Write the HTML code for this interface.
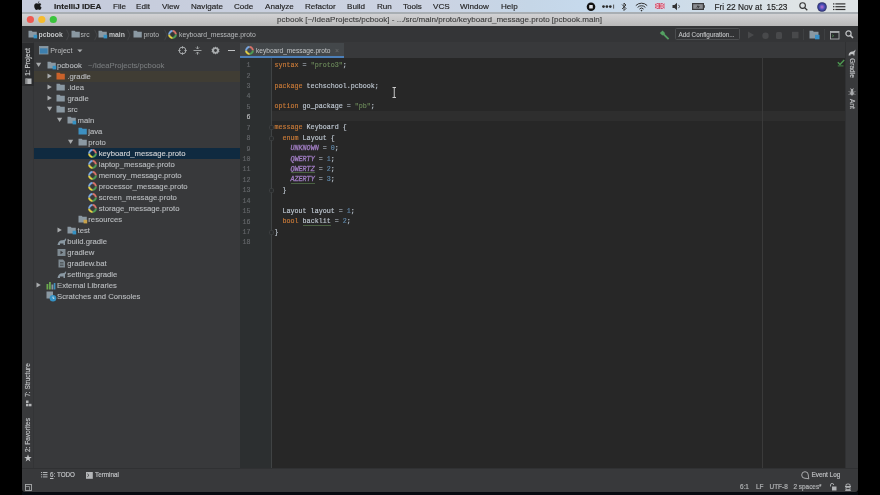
<!DOCTYPE html><html><head><meta charset="utf-8"><style>
*{margin:0;padding:0;box-sizing:border-box}
html,body{width:880px;height:495px;overflow:hidden;background:#000}
body{position:relative;font-family:"Liberation Sans",sans-serif}
#wrap{position:absolute;left:0;top:0;width:880px;height:495px;filter:blur(0.3px)}
.a{position:absolute}
.t{position:absolute;white-space:nowrap;line-height:1}
svg{position:absolute;overflow:visible}
#menubar{left:22px;top:0;width:836px;height:12px;background:linear-gradient(90deg,#c7cddd 0px,#c6ccdc 85px,#cad1e0 278px,#ccd3e2 405px,#c5d6e7 508px,#c6d9ec 558px,#d0dde8 689px,#dfe4e6 772px,#dee4e6 836px)}
#menuline{left:22px;top:12px;width:836px;height:1.8px;background:#a8aeb3}
#titlebar{left:22px;top:13.8px;width:836px;height:12.2px;background:linear-gradient(#d2d2d4,#b9b9b9)}
#navbar{left:22px;top:26px;width:836px;height:16px;background:#343537}
#lstrip{left:22px;top:42px;width:12px;height:426px;background:#38393b;border-right:1px solid #333436}
#proj{left:34px;top:42px;width:206px;height:426px;background:#38393b}
#tabs{left:240px;top:42px;width:605px;height:16px;background:#38393b}
#gutter{left:240px;top:58px;width:32px;height:410px;background:#2c2f30}
#gline{left:271px;top:58px;width:1px;height:410px;background:#404344}
#editor{left:272px;top:58px;width:573px;height:410px;background:#272727}
#rstrip{left:845px;top:42px;width:13px;height:426px;background:#38393b;border-left:1px solid #303133}
#bstrip{left:22px;top:468px;width:836px;height:13px;background:#38393b;border-top:1px solid #303133}
#status{left:22px;top:481px;width:836px;height:10.8px;background:#38393b;border-radius:0 0 3px 3px}
#bottomnavy{left:22px;top:492px;width:836px;height:3px;background:#070a10}
.menu{top:3px;font-size:8.1px;color:#222;-webkit-text-stroke:0.15px currentColor}
.tree{font-size:7.7px;color:#b9bcbf;-webkit-text-stroke:0.12px currentColor}
.code{font-family:"Liberation Mono",monospace;font-size:6.7px;color:#bfc8d2;-webkit-text-stroke:0.15px currentColor}
.ln{font-family:"Liberation Mono",monospace;font-size:6.6px;color:#5c5f61;text-align:right;width:20px;-webkit-text-stroke:0.15px currentColor}
.kw{color:#c97a38}
.str{color:#6a8759}
.num{color:#6089ab}
.en{color:#9f7cc0;font-style:italic;-webkit-text-stroke:0.3px currentColor}
.sm{font-size:6.4px;color:#bcbec0;-webkit-text-stroke:0.2px currentColor}
</style></head><body><div id="wrap">
<div class="a" id="bottomnavy"></div>
<div class="a" id="menubar"></div>
<div class="a" id="menuline"></div>
<div class="a" id="titlebar"></div>
<div class="a" id="navbar"></div>
<div class="a" id="lstrip"></div>
<div class="a" id="proj"></div>
<div class="a" id="tabs"></div>
<div class="a" id="gutter"></div>
<div class="a" id="editor"></div>
<div class="a" id="gline"></div>
<div class="a" id="rstrip"></div>
<div class="a" id="bstrip"></div>
<div class="a" id="status"></div>
<div class="t menu" style="left:54px;font-weight:bold;">IntelliJ IDEA</div>
<div class="t menu" style="left:113px;">File</div>
<div class="t menu" style="left:136px;">Edit</div>
<div class="t menu" style="left:162px;">View</div>
<div class="t menu" style="left:191px;">Navigate</div>
<div class="t menu" style="left:234px;">Code</div>
<div class="t menu" style="left:265px;">Analyze</div>
<div class="t menu" style="left:305px;">Refactor</div>
<div class="t menu" style="left:347px;">Build</div>
<div class="t menu" style="left:377px;">Run</div>
<div class="t menu" style="left:403px;">Tools</div>
<div class="t menu" style="left:433px;">VCS</div>
<div class="t menu" style="left:460px;">Window</div>
<div class="t menu" style="left:501px;">Help</div>
<div class="t menu" style="left:714.5px;font-size:8.3px;top:2.9px">Fri 22 Nov at&nbsp; 15:23</div>
<svg style="left:34px;top:1px" width="8" height="10" viewBox="0 0 8 10"><path d="M5.3 0.3c0.1 0.7-0.4 1.6-1.2 1.7-0.1-0.7 0.4-1.5 1.2-1.7zM4 2.6c0.5 0 1-0.4 1.6-0.4 0.6 0 1.3 0.4 1.7 1-1.4 0.8-1.2 2.8 0.3 3.4-0.3 0.9-1 2.4-1.9 2.4-0.6 0-0.8-0.4-1.6-0.4-0.8 0-1 0.4-1.6 0.4C1.5 9 0.2 6.9 0.2 5 0.2 3.3 1.300 2.300 2.400 2.300c0.7 0 1.100 0.300 1.600 0.300z" fill="#1a1a1a"/></svg>
<svg style="left:586px;top:2px" width="10" height="10"><circle cx="5" cy="4.8" r="4.3" fill="#111"/><rect x="3.2" y="3" width="3.6" height="3.6" rx="0.6" fill="#e1e4ea"/></svg>
<svg style="left:601.5px;top:4px" width="14" height="6"><circle cx="1.5" cy="2.6" r="1.35" fill="#2a2a2a"/><circle cx="4.9" cy="2.6" r="1.35" fill="#2a2a2a"/><circle cx="8.3" cy="2.6" r="1.35" fill="#2a2a2a"/><rect x="11.2" y="0.6" width="0.9" height="4" fill="#444"/></svg>
<svg style="left:621px;top:1.5px" width="7" height="10"><path d="M1 2.5L5 6.5 3 8.5V1L5 3 1 7" stroke="#333" stroke-width="0.9" fill="none"/></svg>
<svg style="left:635px;top:1.5px" width="13" height="10"><path d="M0.8 3.6a8 8 0 0 1 11.4 0M2.6 5.4a5.4 5.4 0 0 1 7.8 0M4.4 7.1a2.8 2.8 0 0 1 4.2 0" stroke="#333" stroke-width="1" fill="none"/><circle cx="6.5" cy="8.6" r="0.8" fill="#333"/></svg>
<svg style="left:655px;top:3.3px" width="10" height="6"><rect width="9.5" height="6" fill="#c65a78"/><path d="M0 0L9.5 6M9.5 0L0 6" stroke="#f0d0e0" stroke-width="1"/><path d="M4.75 0V6M0 3H9.5" stroke="#f4e4ee" stroke-width="1.8"/><path d="M4.75 0V6M0 3H9.5" stroke="#d0304a" stroke-width="1"/></svg>
<svg style="left:672px;top:2px" width="10" height="9"><path d="M0.5 3H2.5L5 0.8V8.2L2.5 6H0.5Z" fill="#333"/><path d="M6.5 2.8a2.2 2.2 0 0 1 0 3.4" stroke="#333" stroke-width="0.8" fill="none"/></svg>
<svg style="left:692px;top:3px" width="14" height="7"><rect x="0.6" y="0.6" width="10.8" height="5.8" fill="#8a8c90" stroke="#3a3a3c" stroke-width="1.2"/><rect x="11.8" y="2.2" width="1.2" height="2.6" fill="#555"/><path d="M4 5.5L6.2 1.5 6.2 3.3 8 3.3 5.8 5.5 5.8 3.8Z" fill="#333"/></svg>
<svg style="left:799px;top:2px" width="9" height="9"><circle cx="3.6" cy="3.6" r="2.8" stroke="#333" stroke-width="1.1" fill="none"/><path d="M5.6 5.6L8.3 8.3" stroke="#333" stroke-width="1.3"/></svg>
<svg style="left:817px;top:1.5px" width="10" height="10"><defs><radialGradient id="sg" cx="0.5" cy="0.5" r="0.6"><stop offset="0" stop-color="#c070d0"/><stop offset="0.45" stop-color="#4a4fb8"/><stop offset="1" stop-color="#1c2040"/></radialGradient></defs><circle cx="5" cy="5" r="4.8" fill="url(#sg)"/></svg>
<svg style="left:833px;top:2.5px" width="13" height="8"><g fill="#333"><rect x="0" y="0.3" width="1.4" height="1.2"/><rect x="0" y="3.1" width="1.4" height="1.2"/><rect x="0" y="5.9" width="1.4" height="1.2"/><rect x="2.4" y="0.3" width="10" height="1.2"/><rect x="2.4" y="3.1" width="10" height="1.2"/><rect x="2.4" y="5.9" width="10" height="1.2"/></g></svg>
<svg style="left:26px;top:15px" width="32" height="9"><circle cx="4.4" cy="4.5" r="3.6" fill="#ee5a52"/><circle cx="15.8" cy="4.5" r="3.6" fill="#f5bb2e"/><circle cx="27.3" cy="4.5" r="3.6" fill="#3bc43d"/></svg>
<div class="t" style="left:277px;top:16.2px;font-size:8.05px;color:#3a3a3a;-webkit-text-stroke:0.1px currentColor">pcbook [~/IdeaProjects/pcbook] - .../src/main/proto/keyboard_message.proto [pcbook.main]</div>
<svg style="left:27.5px;top:30px" width="10" height="9"><path d="M0.5 0.8H3.6L4.6 1.8H8.8V7.6H0.5Z" fill="#8a98a2"/><rect x="5.6" y="4.8" width="3.6" height="3.6" fill="#3592c4"/></svg>
<div class="t" style="left:38.5px;top:31.9px;font-size:6.8px;font-weight:bold;color:#c4c6c8">pcbook</div>
<svg style="left:65.8px;top:28.5px" width="4" height="12"><path d="M0.6 0.8L3 6 0.6 11.2" stroke="#47494b" stroke-width="0.8" fill="none"/></svg>
<svg style="left:71px;top:30px" width="10" height="9"><path d="M0.5 0.8H3.6L4.6 1.8H8.8V7.6H0.5Z" fill="#8a98a2"/></svg>
<div class="t" style="left:80.5px;top:31.9px;font-size:6.8px;color:#b8babc">src</div>
<svg style="left:93.8px;top:28.5px" width="4" height="12"><path d="M0.6 0.8L3 6 0.6 11.2" stroke="#47494b" stroke-width="0.8" fill="none"/></svg>
<svg style="left:98px;top:30px" width="10" height="9"><path d="M0.5 0.8H3.6L4.6 1.8H8.8V7.6H0.5Z" fill="#8a98a2"/><rect x="5.6" y="4.8" width="3.6" height="3.6" fill="#3592c4"/></svg>
<div class="t" style="left:109px;top:31.9px;font-size:6.8px;font-weight:bold;color:#c4c6c8">main</div>
<svg style="left:126.8px;top:28.5px" width="4" height="12"><path d="M0.6 0.8L3 6 0.6 11.2" stroke="#47494b" stroke-width="0.8" fill="none"/></svg>
<svg style="left:133px;top:30px" width="10" height="9"><path d="M0.5 0.8H3.6L4.6 1.8H8.8V7.6H0.5Z" fill="#8a98a2"/></svg>
<div class="t" style="left:143.5px;top:31.9px;font-size:6.8px;color:#b8babc">proto</div>
<svg style="left:163.8px;top:28.5px" width="4" height="12"><path d="M0.6 0.8L3 6 0.6 11.2" stroke="#47494b" stroke-width="0.8" fill="none"/></svg>
<svg style="left:168px;top:29.8px" width="9" height="9" viewBox="0 0 9 9"><path d="M4.5 1.1A3.4 3.4 0 0 1 7.9 4.5" stroke="#d9736a" stroke-width="2" fill="none"/><path d="M7.9 4.5A3.4 3.4 0 0 1 4.5 7.9" stroke="#4e9c55" stroke-width="2" fill="none"/><path d="M4.5 7.9A3.4 3.4 0 0 1 1.1 4.5" stroke="#e3cf45" stroke-width="2" fill="none"/><path d="M1.1 4.5A3.4 3.4 0 0 1 4.5 1.1" stroke="#78a6e0" stroke-width="2" fill="none"/></svg>
<div class="t" style="left:179px;top:31.9px;font-size:6.8px;color:#b8babc">keyboard_message.proto</div>
<svg style="left:658.5px;top:29.5px" width="12" height="11"><path d="M0.8 3L3.6 0.6 6.2 3.2 3.4 5.6Z" fill="#54a062"/><path d="M4.2 3.8L9.6 9.2" stroke="#54a062" stroke-width="1.8"/></svg>
<div class="a" style="left:675px;top:28.3px;width:65px;height:12.2px;border:1px solid #4c4e50;border-radius:1.5px;background:#323335"></div>
<div class="t" style="left:678.5px;top:32px;font-size:6.35px;color:#c0c2c4;-webkit-text-stroke:0.1px currentColor">Add Configuration...</div>
<svg style="left:747px;top:31px" width="8" height="8"><path d="M1 0.5L7 4 1 7.5Z" fill="#48494b"/></svg>
<svg style="left:761px;top:30.5px" width="9" height="9"><circle cx="4.5" cy="4.8" r="3.2" fill="#48494b"/></svg>
<svg style="left:775px;top:30.5px" width="9" height="9"><rect x="1" y="1" width="6" height="7" rx="1.5" fill="#48494b"/></svg>
<svg style="left:791px;top:31px" width="9" height="9"><rect x="1" y="0.8" width="6.5" height="6.5" fill="#48494b"/></svg>
<div class="a" style="left:803px;top:29px;width:1px;height:11px;background:#3e4042"></div>
<svg style="left:809px;top:30px" width="12" height="10"><path d="M0.5 0.8H3.8L4.8 1.8H9.5V8.5H0.5Z" fill="#8a98a2"/><rect x="6" y="4.8" width="4.5" height="4.5" fill="#3a8fc6"/></svg>
<div class="a" style="left:824px;top:29px;width:1px;height:11px;background:#3e4042"></div>
<svg style="left:829.5px;top:30.5px" width="10" height="9"><rect x="0.5" y="0.5" width="8.5" height="7.5" fill="#2a2c2e" stroke="#a8abad" stroke-width="0.9"/><rect x="0.5" y="0.5" width="8.5" height="1.4" fill="#a8abad"/><path d="M2.3 3.8L3.6 4.8 2.3 5.8" stroke="#5aa55a" stroke-width="0.8" fill="none"/></svg>
<svg style="left:845px;top:30px" width="9" height="9"><circle cx="3.5" cy="3.5" r="2.6" stroke="#c0c2c4" stroke-width="1.2" fill="none"/><path d="M5.4 5.4L8 8" stroke="#c0c2c4" stroke-width="1.5"/></svg>
<div class="a" style="left:22px;top:42.5px;width:11.5px;height:43.5px;background:#2b2c2e"></div>
<div class="t sm" style="left:28px;top:61.5px;transform:translate(-50%,-50%) rotate(-90deg);color:#c8cacc;font-size:6.5px">1: Project</div>
<svg style="left:24.5px;top:77.5px" width="7" height="7"><rect x="0.5" y="0.5" width="6" height="5.5" fill="#b8babc"/><rect x="0.5" y="0.5" width="2" height="5.5" fill="#8a8c8e"/></svg>
<div class="t sm" style="left:28px;top:380px;transform:translate(-50%,-50%) rotate(-90deg);font-size:6.5px">7: Structure</div>
<svg style="left:24.5px;top:400px" width="7" height="7"><rect x="1" y="0.5" width="2.5" height="2.5" fill="#b4b6b8"/><rect x="1" y="3.8" width="2.5" height="2.5" fill="#b4b6b8"/><rect x="4" y="3.8" width="2.5" height="2.5" fill="#b4b6b8"/></svg>
<div class="t sm" style="left:28px;top:435px;transform:translate(-50%,-50%) rotate(-90deg);font-size:6.5px">2: Favorites</div>
<svg style="left:24px;top:453.5px" width="8" height="8" viewBox="0 0 10 10"><path d="M5 0.3L6.2 3.6 9.7 3.7 6.9 5.8 7.9 9.3 5 7.2 2.1 9.3 3.1 5.8 0.3 3.7 3.8 3.6Z" fill="#c0c2c4"/></svg>
<svg style="left:39px;top:46px" width="10" height="9"><rect x="0.5" y="0.5" width="8.5" height="7.5" fill="#3d7fae" stroke="#8a98a2" stroke-width="0.8"/><rect x="0.5" y="0.5" width="8.5" height="1.8" fill="#8a98a2"/></svg>
<div class="t" style="left:50.3px;top:48.2px;font-size:7.1px;color:#bdbfc1">Project</div>
<svg style="left:77px;top:49px" width="6" height="4"><path d="M0.3 0.5H5.5L2.9 3.3Z" fill="#a8abad"/></svg>
<svg style="left:177.5px;top:46px" width="9" height="9"><circle cx="4.5" cy="4.5" r="3.4" stroke="#a8abad" stroke-width="1" fill="none"/><path d="M4.5 0.3V2.6M4.5 6.4V8.7M0.3 4.5H2.6M6.4 4.5H8.7" stroke="#a8abad" stroke-width="1"/></svg>
<svg style="left:193px;top:46px" width="9" height="9"><path d="M0.5 4.5H8.5" stroke="#a8abad" stroke-width="0.9"/><path d="M4.5 0.3V2.8M3 1.5L4.5 3 6 1.5M4.5 8.7V6.2M3 7.5L4.5 6 6 7.5" stroke="#a8abad" stroke-width="0.9" fill="none"/></svg>
<svg style="left:211px;top:46px" width="9" height="9" viewBox="0 0 10 10"><path d="M5 0.5L6 1.8 7.6 1.3 7.9 2.9 9.5 3.4 8.8 5 9.5 6.6 7.9 7.1 7.6 8.7 6 8.2 5 9.5 4 8.2 2.4 8.7 2.1 7.1 0.5 6.6 1.2 5 0.5 3.4 2.1 2.9 2.4 1.3 4 1.8Z" fill="#a8abad"/><circle cx="5" cy="5" r="1.6" fill="#38393b"/></svg>
<div class="a" style="left:228px;top:50px;width:7px;height:1.2px;background:#c0c2c4"></div>
<div class="a" style="left:34px;top:70.5px;width:206px;height:11px;background:#403d34"></div>
<div class="a" style="left:34px;top:148px;width:206px;height:11px;background:#0f2a40"></div>
<svg style="left:36.4px;top:62px" width="6" height="6"><path d="M0 0.8H5.2L2.6 5Z" fill="#a8abad"/></svg>
<svg style="left:46.7px;top:60.5px" width="10" height="9"><path d="M0.5 0.8H3.6L4.6 1.8H8.8V7.6H0.5Z" fill="#8a98a2"/><rect x="5.6" y="4.8" width="3.6" height="3.6" fill="#3592c4"/></svg>
<div class="t tree" style="left:57px;top:61.7px;color:#b9bcbf">pcbook</div>
<div class="t tree" style="left:88px;top:61.7px;color:#76797b">~/IdeaProjects/pcbook</div>
<svg style="left:46.7px;top:73px" width="6" height="6"><path d="M0.5 0.6L4.8 3 0.5 5.4Z" fill="#a8abad"/></svg>
<svg style="left:56px;top:71.5px" width="10" height="9"><path d="M0.5 0.8H3.6L4.6 1.8H8.8V7.6H0.5Z" fill="#c9622a"/></svg>
<div class="t tree" style="left:67.4px;top:72.7px;color:#b9bcbf">.gradle</div>
<svg style="left:46.7px;top:84px" width="6" height="6"><path d="M0.5 0.6L4.8 3 0.5 5.4Z" fill="#a8abad"/></svg>
<svg style="left:56px;top:82.5px" width="10" height="9"><path d="M0.5 0.8H3.6L4.6 1.8H8.8V7.6H0.5Z" fill="#8a98a2"/></svg>
<div class="t tree" style="left:67.4px;top:83.7px;color:#b9bcbf">.idea</div>
<svg style="left:46.7px;top:95px" width="6" height="6"><path d="M0.5 0.6L4.8 3 0.5 5.4Z" fill="#a8abad"/></svg>
<svg style="left:56px;top:93.5px" width="10" height="9"><path d="M0.5 0.8H3.6L4.6 1.8H8.8V7.6H0.5Z" fill="#8a98a2"/></svg>
<div class="t tree" style="left:67.4px;top:94.7px;color:#b9bcbf">gradle</div>
<svg style="left:46.7px;top:106px" width="6" height="6"><path d="M0 0.8H5.2L2.6 5Z" fill="#a8abad"/></svg>
<svg style="left:56px;top:104.5px" width="10" height="9"><path d="M0.5 0.8H3.6L4.6 1.8H8.8V7.6H0.5Z" fill="#8a98a2"/></svg>
<div class="t tree" style="left:67.4px;top:105.7px;color:#b9bcbf">src</div>
<svg style="left:57px;top:117px" width="6" height="6"><path d="M0 0.8H5.2L2.6 5Z" fill="#a8abad"/></svg>
<svg style="left:67px;top:115.5px" width="10" height="9"><path d="M0.5 0.8H3.6L4.6 1.8H8.8V7.6H0.5Z" fill="#8a98a2"/><rect x="5.6" y="4.8" width="3.6" height="3.6" fill="#3592c4"/></svg>
<div class="t tree" style="left:77.5px;top:116.7px;color:#b9bcbf">main</div>
<svg style="left:77.8px;top:126.5px" width="10" height="9"><path d="M0.5 0.8H3.6L4.6 1.8H8.8V7.6H0.5Z" fill="#3d8fc0"/></svg>
<div class="t tree" style="left:88.3px;top:127.7px;color:#b9bcbf">java</div>
<svg style="left:68px;top:139px" width="6" height="6"><path d="M0 0.8H5.2L2.6 5Z" fill="#a8abad"/></svg>
<svg style="left:77.8px;top:137.5px" width="10" height="9"><path d="M0.5 0.8H3.6L4.6 1.8H8.8V7.6H0.5Z" fill="#8a98a2"/></svg>
<div class="t tree" style="left:88.3px;top:138.7px;color:#b9bcbf">proto</div>
<svg style="left:87.8px;top:148.5px" width="9" height="9" viewBox="0 0 9 9"><path d="M4.5 1.1A3.4 3.4 0 0 1 7.9 4.5" stroke="#d9736a" stroke-width="2" fill="none"/><path d="M7.9 4.5A3.4 3.4 0 0 1 4.5 7.9" stroke="#4e9c55" stroke-width="2" fill="none"/><path d="M4.5 7.9A3.4 3.4 0 0 1 1.1 4.5" stroke="#e3cf45" stroke-width="2" fill="none"/><path d="M1.1 4.5A3.4 3.4 0 0 1 4.5 1.1" stroke="#78a6e0" stroke-width="2" fill="none"/></svg>
<div class="t tree" style="left:98.7px;top:149.7px;color:#d0d2d4">keyboard_message.proto</div>
<svg style="left:87.8px;top:159.5px" width="9" height="9" viewBox="0 0 9 9"><path d="M4.5 1.1A3.4 3.4 0 0 1 7.9 4.5" stroke="#d9736a" stroke-width="2" fill="none"/><path d="M7.9 4.5A3.4 3.4 0 0 1 4.5 7.9" stroke="#4e9c55" stroke-width="2" fill="none"/><path d="M4.5 7.9A3.4 3.4 0 0 1 1.1 4.5" stroke="#e3cf45" stroke-width="2" fill="none"/><path d="M1.1 4.5A3.4 3.4 0 0 1 4.5 1.1" stroke="#78a6e0" stroke-width="2" fill="none"/></svg>
<div class="t tree" style="left:98.7px;top:160.7px;color:#b9bcbf">laptop_message.proto</div>
<svg style="left:87.8px;top:170.5px" width="9" height="9" viewBox="0 0 9 9"><path d="M4.5 1.1A3.4 3.4 0 0 1 7.9 4.5" stroke="#d9736a" stroke-width="2" fill="none"/><path d="M7.9 4.5A3.4 3.4 0 0 1 4.5 7.9" stroke="#4e9c55" stroke-width="2" fill="none"/><path d="M4.5 7.9A3.4 3.4 0 0 1 1.1 4.5" stroke="#e3cf45" stroke-width="2" fill="none"/><path d="M1.1 4.5A3.4 3.4 0 0 1 4.5 1.1" stroke="#78a6e0" stroke-width="2" fill="none"/></svg>
<div class="t tree" style="left:98.7px;top:171.7px;color:#b9bcbf">memory_message.proto</div>
<svg style="left:87.8px;top:181.5px" width="9" height="9" viewBox="0 0 9 9"><path d="M4.5 1.1A3.4 3.4 0 0 1 7.9 4.5" stroke="#d9736a" stroke-width="2" fill="none"/><path d="M7.9 4.5A3.4 3.4 0 0 1 4.5 7.9" stroke="#4e9c55" stroke-width="2" fill="none"/><path d="M4.5 7.9A3.4 3.4 0 0 1 1.1 4.5" stroke="#e3cf45" stroke-width="2" fill="none"/><path d="M1.1 4.5A3.4 3.4 0 0 1 4.5 1.1" stroke="#78a6e0" stroke-width="2" fill="none"/></svg>
<div class="t tree" style="left:98.7px;top:182.7px;color:#b9bcbf">processor_message.proto</div>
<svg style="left:87.8px;top:192.5px" width="9" height="9" viewBox="0 0 9 9"><path d="M4.5 1.1A3.4 3.4 0 0 1 7.9 4.5" stroke="#d9736a" stroke-width="2" fill="none"/><path d="M7.9 4.5A3.4 3.4 0 0 1 4.5 7.9" stroke="#4e9c55" stroke-width="2" fill="none"/><path d="M4.5 7.9A3.4 3.4 0 0 1 1.1 4.5" stroke="#e3cf45" stroke-width="2" fill="none"/><path d="M1.1 4.5A3.4 3.4 0 0 1 4.5 1.1" stroke="#78a6e0" stroke-width="2" fill="none"/></svg>
<div class="t tree" style="left:98.7px;top:193.7px;color:#b9bcbf">screen_message.proto</div>
<svg style="left:87.8px;top:203.5px" width="9" height="9" viewBox="0 0 9 9"><path d="M4.5 1.1A3.4 3.4 0 0 1 7.9 4.5" stroke="#d9736a" stroke-width="2" fill="none"/><path d="M7.9 4.5A3.4 3.4 0 0 1 4.5 7.9" stroke="#4e9c55" stroke-width="2" fill="none"/><path d="M4.5 7.9A3.4 3.4 0 0 1 1.1 4.5" stroke="#e3cf45" stroke-width="2" fill="none"/><path d="M1.1 4.5A3.4 3.4 0 0 1 4.5 1.1" stroke="#78a6e0" stroke-width="2" fill="none"/></svg>
<div class="t tree" style="left:98.7px;top:204.7px;color:#b9bcbf">storage_message.proto</div>
<svg style="left:77.8px;top:214.5px" width="10" height="9"><path d="M0.5 0.8H3.6L4.6 1.8H8.8V7.6H0.5Z" fill="#8a98a2"/><rect x="5.6" y="4.8" width="3.6" height="3.6" fill="#c9a24a"/></svg>
<div class="t tree" style="left:88.3px;top:215.7px;color:#b9bcbf">resources</div>
<svg style="left:57.3px;top:227px" width="6" height="6"><path d="M0.5 0.6L4.8 3 0.5 5.4Z" fill="#a8abad"/></svg>
<svg style="left:67.3px;top:225.5px" width="10" height="9"><path d="M0.5 0.8H3.6L4.6 1.8H8.8V7.6H0.5Z" fill="#8a98a2"/><rect x="5.6" y="4.8" width="3.6" height="3.6" fill="#3592c4"/></svg>
<div class="t tree" style="left:77.6px;top:226.7px;color:#b9bcbf">test</div>
<svg style="left:57.3px;top:236.5px" width="10" height="9"><path d="M0.5 8C1 4.5 3 3 5.5 3.2 7.5 3.3 8.5 2 9 1 9.5 2.5 8.8 4 8 4.5V8H6.5V6.5H3V8Z" fill="#8a98a2"/></svg>
<div class="t tree" style="left:67.3px;top:237.7px;color:#b9bcbf">build.gradle</div>
<svg style="left:57.3px;top:247.5px" width="10" height="9"><rect x="0.5" y="1" width="8" height="7" fill="#7e8a92"/><path d="M3.5 2.8L6.2 4.5 3.5 6.2Z" fill="#38393b"/></svg>
<div class="t tree" style="left:67.3px;top:248.7px;color:#b9bcbf">gradlew</div>
<svg style="left:57.3px;top:258.5px" width="10" height="9"><path d="M1.5 0.5H6L8 2.5V8.5H1.5Z" fill="#7e8a92"/><path d="M3 3.5H6.5M3 5H6.5M3 6.5H6.5" stroke="#38393b" stroke-width="0.6"/></svg>
<div class="t tree" style="left:67.3px;top:259.7px;color:#b9bcbf">gradlew.bat</div>
<svg style="left:57.3px;top:269.5px" width="10" height="9"><path d="M0.5 8C1 4.5 3 3 5.5 3.2 7.5 3.3 8.5 2 9 1 9.5 2.5 8.8 4 8 4.5V8H6.5V6.5H3V8Z" fill="#8a98a2"/></svg>
<div class="t tree" style="left:67.3px;top:270.7px;color:#b9bcbf">settings.gradle</div>
<svg style="left:36.4px;top:282px" width="6" height="6"><path d="M0.5 0.6L4.8 3 0.5 5.4Z" fill="#a8abad"/></svg>
<svg style="left:46.4px;top:280.5px" width="10" height="9"><rect x="0.5" y="3" width="1.8" height="5.5" fill="#6aa84f"/><rect x="3" y="1" width="1.8" height="7.5" fill="#6aa84f"/><rect x="5.5" y="3.5" width="1.8" height="5" fill="#8a98a2"/><rect x="7.8" y="2" width="1.6" height="6.5" fill="#3d8fc0"/></svg>
<div class="t tree" style="left:57px;top:281.7px;color:#b9bcbf">External Libraries</div>
<svg style="left:46.4px;top:291.0px" width="11" height="11"><rect x="0.5" y="0.5" width="6.5" height="7" fill="#8a98a2"/><circle cx="7" cy="7.2" r="3.3" fill="#3592c4"/><path d="M7 5.5V7.3H8.3" stroke="#fff" stroke-width="0.7" fill="none"/></svg>
<div class="t tree" style="left:57px;top:292.7px;color:#b9bcbf">Scratches and Consoles</div>
<div class="a" style="left:240px;top:42.7px;width:104px;height:13.5px;background:#43474a"></div>
<div class="a" style="left:240px;top:56px;width:104px;height:2.2px;background:#4c7fb9"></div>
<svg style="left:244.5px;top:45.5px" width="9" height="9" viewBox="0 0 9 9"><path d="M4.5 1.1A3.4 3.4 0 0 1 7.9 4.5" stroke="#d9736a" stroke-width="2" fill="none"/><path d="M7.9 4.5A3.4 3.4 0 0 1 4.5 7.9" stroke="#4e9c55" stroke-width="2" fill="none"/><path d="M4.5 7.9A3.4 3.4 0 0 1 1.1 4.5" stroke="#e3cf45" stroke-width="2" fill="none"/><path d="M1.1 4.5A3.4 3.4 0 0 1 4.5 1.1" stroke="#78a6e0" stroke-width="2" fill="none"/></svg>
<div class="t" style="left:256px;top:48.1px;font-size:6.6px;color:#c4c6c8">keyboard_message.proto</div>
<div class="t" style="left:335px;top:46.5px;font-size:7px;color:#6a6d6f">&#215;</div>
<div class="a" style="left:272px;top:110.5px;width:573px;height:10px;background:#2e2e2e"></div>
<div class="a" style="left:762px;top:58px;width:1px;height:410px;background:#3a3a3a"></div>
<div class="t ln" style="left:230.5px;top:63.20px;color:#64676a">1</div>
<div class="t ln" style="left:230.5px;top:73.62px;color:#64676a">2</div>
<div class="t ln" style="left:230.5px;top:84.04px;color:#64676a">3</div>
<div class="t ln" style="left:230.5px;top:94.46px;color:#64676a">4</div>
<div class="t ln" style="left:230.5px;top:104.88px;color:#64676a">5</div>
<div class="t ln" style="left:230.5px;top:115.30px;color:#b8babc">6</div>
<div class="t ln" style="left:230.5px;top:125.72px;color:#64676a">7</div>
<div class="t ln" style="left:230.5px;top:136.14px;color:#64676a">8</div>
<div class="t ln" style="left:230.5px;top:146.56px;color:#64676a">9</div>
<div class="t ln" style="left:230.5px;top:156.98px;color:#64676a">10</div>
<div class="t ln" style="left:230.5px;top:167.40px;color:#64676a">11</div>
<div class="t ln" style="left:230.5px;top:177.82px;color:#64676a">12</div>
<div class="t ln" style="left:230.5px;top:188.24px;color:#64676a">13</div>
<div class="t ln" style="left:230.5px;top:198.66px;color:#64676a">14</div>
<div class="t ln" style="left:230.5px;top:209.08px;color:#64676a">15</div>
<div class="t ln" style="left:230.5px;top:219.50px;color:#64676a">16</div>
<div class="t ln" style="left:230.5px;top:229.92px;color:#64676a">17</div>
<div class="t ln" style="left:230.5px;top:240.34px;color:#64676a">18</div>
<div class="t code" style="left:274.5px;top:61.80px;white-space:pre"><span class="kw">syntax</span> = <span class="str">"proto3"</span>;</div>
<div class="t code" style="left:274.5px;top:82.64px;white-space:pre"><span class="kw">package</span> techschool.pcbook;</div>
<div class="t code" style="left:274.5px;top:103.48px;white-space:pre"><span class="kw">option</span> go_package = <span class="str">"pb"</span>;</div>
<div class="t code" style="left:274.5px;top:124.32px;white-space:pre"><span class="kw">message</span> Keyboard {</div>
<div class="t code" style="left:274.5px;top:134.74px;white-space:pre">  <span class="kw">enum</span> Layout {</div>
<div class="t code" style="left:274.5px;top:145.16px;white-space:pre">    <span class="en">UNKNOWN</span> = <span class="num">0</span>;</div>
<div class="t code" style="left:274.5px;top:155.58px;white-space:pre">    <span class="en">QWERTY</span> = <span class="num">1</span>;</div>
<div class="t code" style="left:274.5px;top:166.00px;white-space:pre">    <span class="en">QWERTZ</span> = <span class="num">2</span>;</div>
<div class="t code" style="left:274.5px;top:176.42px;white-space:pre">    <span class="en">AZERTY</span> = <span class="num">3</span>;</div>
<div class="t code" style="left:274.5px;top:186.84px;white-space:pre">  }</div>
<div class="t code" style="left:274.5px;top:207.68px;white-space:pre">  Layout layout = <span class="num">1</span>;</div>
<div class="t code" style="left:274.5px;top:218.10px;white-space:pre">  <span class="kw">bool</span> backlit = <span class="num">2</span>;</div>
<div class="t code" style="left:274.5px;top:228.52px;white-space:pre">}</div>
<div class="a" style="left:290.6px;top:172.4px;width:24.1px;height:1px;background:#4a6142"></div>
<div class="a" style="left:290.6px;top:182.8px;width:24.1px;height:1px;background:#4a6142"></div>
<div class="a" style="left:302.6px;top:224.5px;width:28.1px;height:1px;background:#4a6142"></div>
<div class="a" style="left:269px;top:125.3px;width:5px;height:5px;border:0.8px solid #3c3f40;border-radius:1.5px;background:#2a2c2d"></div>
<div class="a" style="left:269px;top:135.7px;width:5px;height:5px;border:0.8px solid #3c3f40;border-radius:1.5px;background:#2a2c2d"></div>
<div class="a" style="left:269px;top:187.8px;width:5px;height:5px;border:0.8px solid #3c3f40;border-radius:1.5px;background:#2a2c2d"></div>
<div class="a" style="left:269px;top:229.5px;width:5px;height:5px;border:0.8px solid #3c3f40;border-radius:1.5px;background:#2a2c2d"></div>
<svg style="left:391.5px;top:86.5px" width="5" height="11"><path d="M0.5 0.5H4M2.25 0.5V10.5M0.5 10.5H4" stroke="#d8d8d8" stroke-width="0.9" fill="none"/></svg>
<svg style="left:836.8px;top:58.8px" width="8" height="8"><path d="M0.8 3.3L3 5.4 7.2 1" stroke="#4e9a52" stroke-width="1.4" fill="none"/><path d="M0.8 6.9H6.5" stroke="#4e9a52" stroke-width="0.8"/></svg>
<svg style="left:847.5px;top:48.5px" width="8" height="7"><path d="M0.5 6.5C1 3.5 2.5 2.5 4.5 2.6 6 2.7 6.8 1.5 7.3 0.6 7.6 2 7.2 3 6.5 3.5V6.5H5.3V5.3H2.5V6.5Z" fill="#c0c2c4"/></svg>
<div class="t sm" style="left:851.7px;top:67.5px;transform:translate(-50%,-50%) rotate(90deg);font-size:6.5px">Gradle</div>
<svg style="left:847.8px;top:88.3px" width="8" height="8"><ellipse cx="4" cy="2" rx="1.3" ry="1.3" fill="#a8aaac"/><ellipse cx="4" cy="5.2" rx="1.8" ry="2.4" fill="#a8aaac"/><path d="M0.5 3.5L2.5 4.2M0.5 6.5L2.5 5.8M7.5 3.5L5.5 4.2M7.5 6.5L5.5 5.8M2 0.3L3.2 1.2M6 0.3L4.8 1.2" stroke="#a8aaac" stroke-width="0.6"/></svg>
<div class="t sm" style="left:851.7px;top:103.5px;transform:translate(-50%,-50%) rotate(90deg);font-size:6.5px">Ant</div>
<svg style="left:41px;top:472px" width="7" height="6"><g fill="#b4b6b8"><rect x="0" y="0" width="1.2" height="1"/><rect x="0" y="2.2" width="1.2" height="1"/><rect x="0" y="4.4" width="1.2" height="1"/><rect x="2" y="0" width="4.5" height="1"/><rect x="2" y="2.2" width="4.5" height="1"/><rect x="2" y="4.4" width="4.5" height="1"/></g></svg>
<div class="t sm" style="left:50px;top:472.2px;font-size:6.3px"><u>6</u>: TODO</div>
<svg style="left:86px;top:471.5px" width="7" height="7"><rect x="0" y="0" width="6.8" height="6.8" fill="#b4b6b8"/><path d="M1.3 1.8L3 3.3 1.3 4.8" stroke="#38393b" stroke-width="0.8" fill="none"/></svg>
<div class="t sm" style="left:95px;top:472.2px;font-size:6.3px">Terminal</div>
<svg style="left:801.3px;top:470.8px" width="9" height="9"><path d="M4 0.7A3.3 3.3 0 0 1 7.3 4C7.3 5.2 7.5 6.8 7.8 7.8 6.8 7.5 5.2 7.3 4 7.3A3.3 3.3 0 0 1 4 0.7Z" stroke="#b4b6b8" stroke-width="0.9" fill="none"/></svg>
<div class="t sm" style="left:811.5px;top:472.2px;font-size:6.4px">Event Log</div>
<svg style="left:24.5px;top:483.5px" width="7" height="7"><rect x="0.5" y="0.5" width="6" height="6" fill="none" stroke="#a8aaac" stroke-width="0.9"/><path d="M0.5 2.5H4.5V6.5" stroke="#a8aaac" stroke-width="0.7" fill="none"/></svg>
<div class="t sm" style="left:740px;top:484.1px;font-size:6.4px;color:#b0b2b4">6:1</div>
<div class="t sm" style="left:756px;top:484.1px;font-size:6.4px;color:#b0b2b4">LF</div>
<div class="t sm" style="left:769.6px;top:484.1px;font-size:6.4px;color:#b0b2b4">UTF-8</div>
<div class="t sm" style="left:793.5px;top:484.1px;font-size:6.4px;color:#b0b2b4">2 spaces*</div>
<svg style="left:829px;top:482.5px" width="8" height="8"><path d="M1.5 3.5V2A1.6 1.6 0 0 1 4.7 2" stroke="#b0b2b4" stroke-width="0.9" fill="none"/><rect x="3" y="3.5" width="4.5" height="4" fill="#b0b2b4"/></svg>
<svg style="left:843.5px;top:482.5px" width="8" height="9"><path d="M2 3V1.5Q4 0.3 6 1.5V3" stroke="#b0b2b4" stroke-width="0.9" fill="none"/><rect x="1" y="3" width="6" height="1" fill="#b0b2b4"/><rect x="2" y="4.4" width="4" height="2.2" fill="none" stroke="#b0b2b4" stroke-width="0.8"/><rect x="1.2" y="7" width="5.6" height="0.9" fill="#b0b2b4"/></svg>
</div></body></html>
